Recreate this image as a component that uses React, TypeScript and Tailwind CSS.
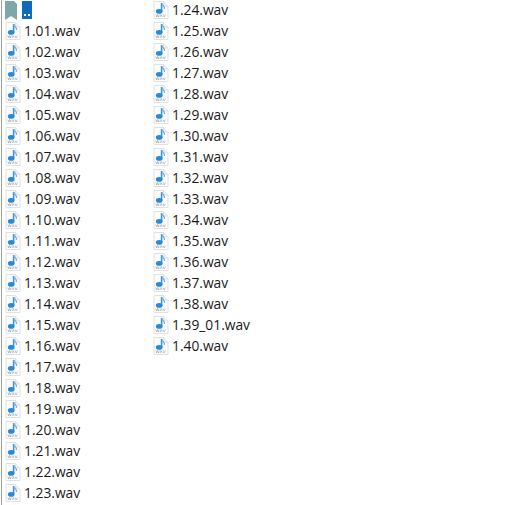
// File listing: two columns of .wav files, Explorer list view style

const FIRST_COLUMN = [
  '1.01', '1.02', '1.03', '1.04', '1.05', '1.06', '1.07', '1.08', '1.09', '1.10', '1.11', '1.12',
  '1.13', '1.14', '1.15', '1.16', '1.17', '1.18', '1.19', '1.20', '1.21', '1.22', '1.23',
];

const SECOND_COLUMN = [
  '1.24', '1.25', '1.26', '1.27', '1.28', '1.29', '1.30', '1.31', '1.32', '1.33', '1.34', '1.35',
  '1.36', '1.37', '1.38', '1.39_01', '1.40',
];

function WavIcon() {
  return (
    <svg width="16" height="18" viewBox="0 0 16 18" className="shrink-0">
      <path d="M1 0.5H10.5L15 5V17.5H1Z" fill="#fdfdfd" stroke="#dfe1e4" />
      <path d="M10.5 0.5V5H15" fill="#eff0f2" stroke="#dfe1e4" />
      <path d="M8.6 2V10.5" stroke="#3a94d8" strokeWidth="1.6" />
      <path d="M8.8 2.5C9.5 5 12 5 11.5 8" fill="none" stroke="#6fb2e4" strokeWidth="1.3" />
      <ellipse cx="6.2" cy="10.4" rx="3.3" ry="2.4" fill="#2b8ad4" />
      <path d="M2.8 13.5l.8 2.5.9-2.5.9 2.5.8-2.5M7 16l1.1-2.5L9.2 16M10 13.5l1.2 2.5 1.2-2.5" fill="none" stroke="#9a9ea2" strokeWidth="0.6" />
    </svg>
  );
}

function FileRow({ name }: { name: string }) {
  return (
    <div className="flex items-center h-[21px]">
      <WavIcon />
      <span className="ml-[3px] text-[13.8px] leading-[21px] text-[#1a1a1a] whitespace-nowrap">{name}.wav</span>
    </div>
  );
}

export default function App() {
  return (
    <div className="w-[527px] h-[505px] overflow-hidden bg-white flex pl-px font-['Open_Sans','Noto_Sans',sans-serif]">
      {/* Column 1, with the pane edge on its left */}
      <div className="w-[152px] pl-[3px] border-l border-[#a0a0a0] shrink-0">
        <div className="-mt-px">
          <div className="flex items-center h-[21px]">
            <svg width="27" height="20" viewBox="0 0 27 20" className="shrink-0">
              <path d="M0 1H9L12 4V20L6 16L0 20Z" fill="#7fa6a8" />
              <rect x="17" y="1" width="10" height="18" fill="#0f6cbd" />
              <rect x="19" y="14" width="2" height="2" fill="#ffffff" />
              <rect x="23" y="14" width="2" height="2" fill="#ffffff" />
            </svg>
          </div>
          {FIRST_COLUMN.map(n => <FileRow key={n} name={n} />)}
        </div>
      </div>

      {/* Column 2 */}
      <div className="-mt-px">
        {SECOND_COLUMN.map(n => <FileRow key={n} name={n} />)}
      </div>
    </div>
  );
}
